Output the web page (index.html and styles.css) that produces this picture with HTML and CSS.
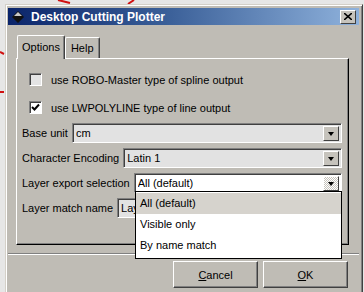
FILE: index.html
```html
<!DOCTYPE html>
<html lang="en">
<head>
    <meta charset="UTF-8">
    <title>Desktop Cutting Plotter</title>
    <link rel="stylesheet" href="styles.css">
</head>
<body>
    <div class="desktop">
        <svg class="marks" width="364" height="292" viewBox="0 0 364 292">
            <path d="M58 0 L70 3" stroke="#d01010" stroke-width="2" fill="none"/>
            <path d="M128 4 L134 0" stroke="#d01010" stroke-width="2" fill="none"/>
            <path d="M0 52 L4 54" stroke="#d01010" stroke-width="2" fill="none"/>
            <path d="M0 92 L4 92" stroke="#d01010" stroke-width="2" fill="none"/>
        </svg>
        <div class="window">
            <div class="titlebar">
                <svg class="app-icon" width="12" height="12" viewBox="0 0 12 12">
                    <path d="M6 0 L12 6 L6 12 L0 6 Z" fill="#111"/>
                    <path d="M6 1 L10 5 L2 5 Z" fill="#c8c8c8"/>
                </svg>
                <span class="title">Desktop Cutting Plotter</span>
                <span class="close">
                    <svg width="8" height="7" viewBox="0 0 8 7">
                        <path d="M0 0 L8 7 M8 0 L0 7" stroke="#000" stroke-width="1.6"/>
                    </svg>
                </span>
            </div>
            <div class="content">
                <div class="tabs">
                    <div class="tab active">Options</div>
                    <div class="tab">Help</div>
                </div>
                <div class="pane">
                    <div class="check-row">
                        <span class="box"></span>
                        <span>use ROBO-Master type of spline output</span>
                    </div>
                    <div class="check-row">
                        <span class="box checked">
                            <svg width="9" height="9" viewBox="0 0 9 9">
                                <path d="M1 4 L3.5 6.5 L8 1.5" stroke="#000" stroke-width="2" fill="none"/>
                            </svg>
                        </span>
                        <span>use LWPOLYLINE type of line output</span>
                    </div>
                    <div class="field">
                        <span class="label">Base unit</span>
                        <div class="combo"><span class="value">cm</span><span class="arrow"></span></div>
                    </div>
                    <div class="field">
                        <span class="label">Character Encoding</span>
                        <div class="combo"><span class="value">Latin 1</span><span class="arrow"></span></div>
                    </div>
                    <div class="field">
                        <span class="label">Layer export selection</span>
                        <div class="combo open"><span class="value">All (default)</span><span class="arrow"></span></div>
                    </div>
                    <div class="field">
                        <span class="label">Layer match name</span>
                        <div class="combo"><span class="value">Lay</span><span class="arrow"></span></div>
                    </div>
                    <ul class="popup">
                        <li class="selected">All (default)</li>
                        <li>Visible only</li>
                        <li>By name match</li>
                    </ul>
                </div>
                <div class="separator"></div>
                <div class="buttons">
                    <button><u>C</u>ancel</button>
                    <button><u>O</u>K</button>
                </div>
            </div>
        </div>
    </div>
</body>
</html>
```

FILE: styles.css
```css
body {
    margin: 0;
    font-family: 'Liberation Sans', Arial, sans-serif;
    font-size: 11px;
    color: #000;
    overflow: hidden;
}
.desktop {
    position: relative;
    width: 364px;
    height: 292px;
    background-color: #e6e6e6;
    padding: 4px 0 0 5px;
    box-sizing: border-box;
    overflow: hidden;
}
.marks {
    position: absolute;
    top: 0;
    left: 0;
}
.window {
    position: relative;
    width: 358px;
    height: 300px;
    background-color: #bfbcb5;
    border-top: 1px solid #d4d0c8;
    border-left: 1px solid #d4d0c8;
    border-right: 1px solid #404040;
    box-shadow: inset 1px 1px 0 #fff, inset -1px 0 0 #808080;
    padding: 3px 3px 0 2px;
    box-sizing: border-box;
}
.titlebar {
    display: flex;
    align-items: center;
    height: 17px;
    padding: 0 3px 0 4px;
    background: linear-gradient(to right, #0a246a 0%, #3a5f98 45%, #8fb2dc 100%);
}
.app-icon {
    margin-right: 7px;
}
.title {
    flex: 1;
    color: #fff;
    font-weight: bold;
    font-size: 12px;
}
.close {
    display: flex;
    align-items: center;
    justify-content: center;
    width: 16px;
    height: 14px;
    box-sizing: border-box;
    background-color: #c6c3bc;
    border-top: 1px solid #fff;
    border-left: 1px solid #fff;
    border-right: 1px solid #404040;
    border-bottom: 1px solid #404040;
}
.content {
    padding: 10px 10px 0 8px;
}
.tabs {
    display: flex;
    align-items: flex-end;
    height: 23px;
    padding-left: 1px;
}
.tab {
    height: 20px;
    line-height: 20px;
    padding: 0 5px;
    border: 1px solid #fff;
    border-bottom: none;
    border-right: 1px solid #404040;
    border-radius: 2px 2px 0 0;
    box-shadow: inset -1px 0 0 #808080;
}
.tab.active {
    height: 23px;
    line-height: 22px;
    padding: 0 4px;
    margin-bottom: -1px;
    background-color: #bfbcb5;
    position: relative;
    z-index: 1;
}
.pane {
    position: relative;
    height: 187px;
    border-top: 1px solid #fff;
    border-left: 1px solid #fff;
    border-right: 1px solid #000;
    border-bottom: 1px solid #000;
    box-shadow: inset -1px -1px 0 #808080;
    box-sizing: border-box;
    padding: 14px 6px 0 5px;
}
.check-row {
    display: flex;
    align-items: center;
    gap: 9px;
    height: 13px;
    margin: 0 0 15px 7px;
}
.box {
    display: flex;
    align-items: center;
    justify-content: center;
    width: 13px;
    height: 13px;
    box-sizing: border-box;
    background-color: #e4e4e4;
    border-top: 1px solid #808080;
    border-left: 1px solid #808080;
    border-right: 1px solid #fff;
    border-bottom: 1px solid #fff;
    box-shadow: inset 1px 1px 0 #404040;
}
.box.checked {
    background-color: #fff;
}
.field {
    display: flex;
    align-items: center;
    gap: 4px;
    height: 20px;
    margin-bottom: 5px;
}
.check-row + .field {
    margin-top: -6px;
}
.combo {
    flex: 1;
    display: flex;
    align-items: center;
    height: 20px;
    box-sizing: border-box;
    padding: 0 2px 0 3px;
    background-color: #e2e2e2;
    border-top: 1px solid #808080;
    border-left: 1px solid #808080;
    border-right: 1px solid #fff;
    border-bottom: 1px solid #fff;
    box-shadow: inset 1px 1px 0 #404040;
}
.combo.open {
    background-color: #fff;
}
.value {
    flex: 1;
    overflow: hidden;
    white-space: nowrap;
}
.arrow {
    position: relative;
    width: 16px;
    height: 15px;
    box-sizing: border-box;
    background-color: #c6c3bc;
    border-top: 1px solid #fff;
    border-left: 1px solid #fff;
    border-right: 1px solid #404040;
    border-bottom: 1px solid #404040;
}
.arrow:after {
    content: "";
    position: absolute;
    left: 4px;
    top: 5px;
    border-left: 3.5px solid transparent;
    border-right: 3.5px solid transparent;
    border-top: 4px solid #000;
}
.open .arrow {
    background-color: #fff;
    background-image: repeating-conic-gradient(#c6c3bc 0 25%, #fff 0 50%);
    background-size: 2px 2px;
}
.popup {
    position: absolute;
    left: 118px;
    top: 132px;
    width: 207px;
    margin: 0;
    padding: 1px 0 2px;
    list-style: none;
    background-color: #fff;
    border: 1px solid #000;
    box-sizing: border-box;
    z-index: 2;
}
.popup li {
    height: 21px;
    line-height: 21px;
    padding-left: 4px;
}
.popup li.selected {
    background-color: #d6d3cd;
}
.separator {
    height: 0;
    margin: 8px -10px 0 -8px;
    border-top: 1px solid #808080;
    border-bottom: 1px solid #fff;
}
.buttons {
    display: flex;
    justify-content: flex-end;
    gap: 5px;
    padding: 6px 1px 0 0;
}
button {
    width: 85px;
    height: 27px;
    font-family: inherit;
    font-size: 11px;
    color: #000;
    background-color: #bfbcb5;
    border-top: 1px solid #fff;
    border-left: 1px solid #fff;
    border-right: 1px solid #404040;
    border-bottom: 1px solid #404040;
    box-shadow: inset -1px -1px 0 #808080;
    padding: 0;
}
```
